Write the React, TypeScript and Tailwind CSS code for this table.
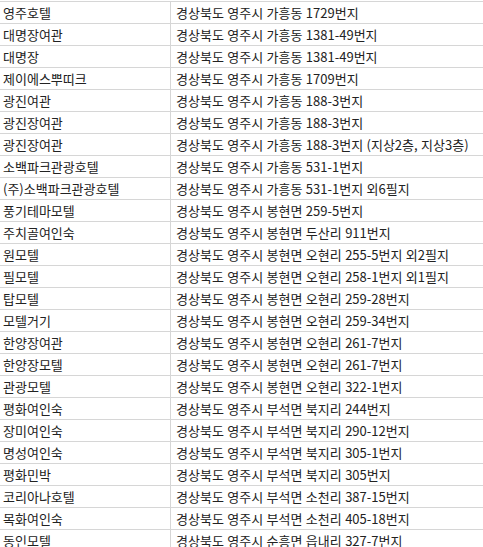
const ROWS: [string, string][] = [
  ["영주호텔", "경상북도 영주시 가흥동 1729번지"],
  ["대명장여관", "경상북도 영주시 가흥동 1381-49번지"],
  ["대명장", "경상북도 영주시 가흥동 1381-49번지"],
  ["제이에스뿌띠크", "경상북도 영주시 가흥동 1709번지"],
  ["광진여관", "경상북도 영주시 가흥동 188-3번지"],
  ["광진장여관", "경상북도 영주시 가흥동 188-3번지"],
  ["광진장여관", "경상북도 영주시 가흥동 188-3번지 (지상2층, 지상3층)"],
  ["소백파크관광호텔", "경상북도 영주시 가흥동 531-1번지"],
  ["(주)소백파크관광호텔", "경상북도 영주시 가흥동 531-1번지 외6필지"],
  ["풍기테마모텔", "경상북도 영주시 봉현면 259-5번지"],
  ["주치골여인숙", "경상북도 영주시 봉현면 두산리 911번지"],
  ["원모텔", "경상북도 영주시 봉현면 오현리 255-5번지 외2필지"],
  ["필모텔", "경상북도 영주시 봉현면 오현리 258-1번지 외1필지"],
  ["탑모텔", "경상북도 영주시 봉현면 오현리 259-28번지"],
  ["모텔거기", "경상북도 영주시 봉현면 오현리 259-34번지"],
  ["한양장여관", "경상북도 영주시 봉현면 오현리 261-7번지"],
  ["한양장모텔", "경상북도 영주시 봉현면 오현리 261-7번지"],
  ["관광모텔", "경상북도 영주시 봉현면 오현리 322-1번지"],
  ["평화여인숙", "경상북도 영주시 부석면 북지리 244번지"],
  ["장미여인숙", "경상북도 영주시 부석면 북지리 290-12번지"],
  ["명성여인숙", "경상북도 영주시 부석면 북지리 305-1번지"],
  ["평화민박", "경상북도 영주시 부석면 북지리 305번지"],
  ["코리아나호텔", "경상북도 영주시 부석면 소천리 387-15번지"],
  ["목화여인숙", "경상북도 영주시 부석면 소천리 405-18번지"],
  ["동인모텔", "경상북도 영주시 순흥면 읍내리 327-7번지"],
];

export default function App() {
  return (
    <div className="h-[547px] w-[483px] overflow-hidden bg-white font-['Noto_Sans_CJK_KR',sans-serif] text-[13px] text-[#222] [word-spacing:0.5px]">
      <div className="mt-px border-t border-[#d6d6d6]">
        {ROWS.map(([name, addr], i) => (
          <div key={i} className="flex h-[22px] border-b border-[#d6d6d6]">
            <div className="flex w-[170px] shrink-0 items-center whitespace-nowrap pl-[3px]">{name}</div>
            <div className="flex flex-1 items-center whitespace-nowrap border-l border-[#d6d6d6] pl-[5px]">{addr}</div>
          </div>
        ))}
      </div>
    </div>
  );
}
